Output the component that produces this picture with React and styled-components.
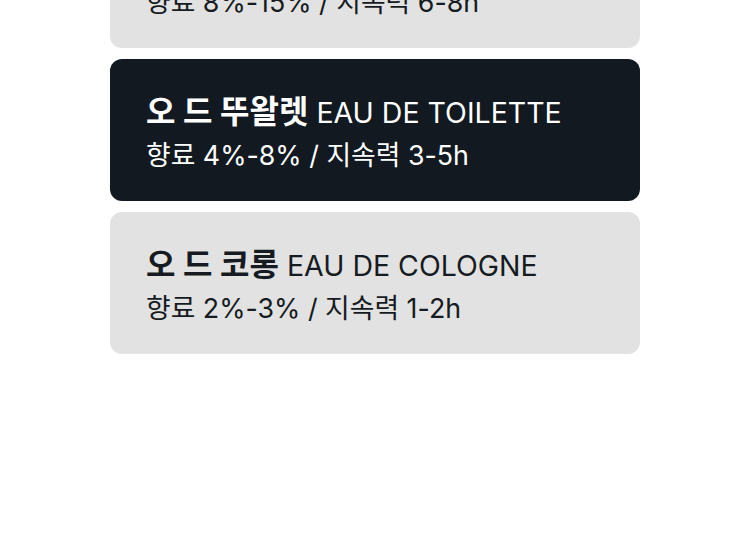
import React from 'react';
import styled, { createGlobalStyle } from 'styled-components';

const GlobalStyle = createGlobalStyle`
  body {
    margin: 0;
    background: #ffffff;
    font-family: Inter, "Noto Sans CJK KR", sans-serif;
  }
`;

const types = [
  { ko: '오 드 퍼퓸', en: 'EAU DE PARFUM', detail: '향료 8%-15% / 지속력 6-8h' },
  { ko: '오 드 뚜왈렛', en: 'EAU DE TOILETTE', detail: '향료 4%-8% / 지속력 3-5h', active: true },
  { ko: '오 드 코롱', en: 'EAU DE COLOGNE', detail: '향료 2%-3% / 지속력 1-2h' },
];

function App() {
  return (
    <>
      <GlobalStyle />
      <Page>
        <List>
          {types.map((t) => (
            <Card key={t.en} $active={t.active}>
              <Title>
                <strong>{t.ko}</strong> {t.en}
              </Title>
              <Detail>{t.detail}</Detail>
            </Card>
          ))}
        </List>
      </Page>
    </>
  );
}

export default App;

const Page = styled.div`
  width: 750px;
  height: 555px;
  overflow: hidden;
`;

const List = styled.div`
  width: 530px;
  margin: -94px auto 0;
  display: flex;
  flex-direction: column;
  gap: 11px;
`;

const Card = styled.div`
  height: 142px;
  box-sizing: border-box;
  padding: 31px 36px 0;
  border-radius: 12px;
  background: ${(p) => (p.$active ? '#121920' : '#e2e2e2')};
  color: ${(p) => (p.$active ? '#ffffff' : '#161b21')};
`;

const Title = styled.div`
  font-size: 28.5px;
  line-height: 44px;
  strong {
    font-size: 32px;
    font-weight: 700;
  }
`;

const Detail = styled.div`
  font-size: 26.8px;
  line-height: 40px;
`;
